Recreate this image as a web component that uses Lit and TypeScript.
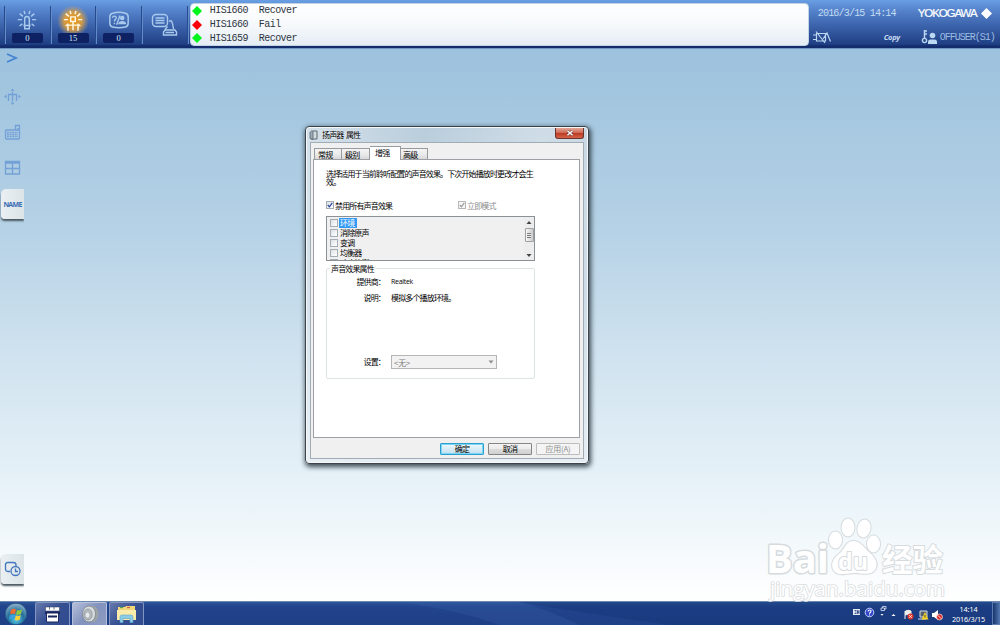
import { html, css, svg, LitElement } from 'lit';
import { customElement, property } from 'lit/decorators.js';
import { classMap } from 'lit/directives/class-map.js';

const MESSAGES = [
  { color: '#00f51c', text: 'HIS1660  Recover' },
  { color: '#fb0006', text: 'HIS1660  Fail' },
  { color: '#00f51c', text: 'HIS1659  Recover' }
];

const TABS = ['常规', '级别', '增强', '高级'];
const EFFECTS = ['环境', '消除原声', '变调', '均衡器', '响度均衡'];

const rays = svg`<path d="M2 10.500H6.500M17.500 10.500H22M4 4L7.500 7M20 4L16.500 7M4 17.500L7 15M20 17.500L17 15M8.800 1L9.800 4.500M15.200 1L14.200 4.500"/>`;

@customElement('system-bar')
export class SystemBar extends LitElement {
  static styles = css`
    :host {
      display: flex;
      height: 49px;
      box-sizing: border-box;
      border-bottom: 1px solid #6f97c4;
      background: linear-gradient(#6a9fe3 0, #5684cd 20%, #385fa7 58%, #203f84 92%, #122c6c 96%, #122c6c);
      color: #c3dcf3;
      font-family: "Liberation Mono", monospace;
    }
    .slot {
      width: 44.700px;
      height: 38px;
      margin-top: 6px;
      border-left: 1px solid #254b8e;
      box-shadow: inset 1px 0 #638bc8;
      display: flex;
      flex-direction: column;
      align-items: center;
    }
    .slot:first-child {
      margin-left: 4px;
    }
    .slot svg {
      width: 22px;
      height: 22px;
      margin: 4px 0 1px;
      fill: none;
      stroke: #a9caed;
      stroke-width: 1.600;
    }
    .slot.lit {
      background: radial-gradient(circle at 22px 15px, #f09a10 0, #e2a03ae0 9px, #c99f6060 13px, #c99f6000 16px);
    }
    .slot.lit svg {
      stroke: #fff8e4;
    }
    .slot.print svg {
      width: 28px;
      height: 26px;
      margin: 5px 0 0;
      stroke-width: 1.400;
    }
    .count {
      width: 31px;
      height: 10px;
      border-radius: 2px;
      background: #0d2163;
      color: #dcecfb;
      font: 8.500px/11px "Liberation Serif", serif;
      text-align: center;
    }
    .log {
      width: 619px;
      height: 43px;
      box-sizing: border-box;
      margin: 3px 0 0;
      padding-left: 1px;
      border-radius: 4px;
      border: 1px solid #c2d4e4;
      background: linear-gradient(#fff, #f5f8fb 55%, #e4edf4);
      display: flex;
      flex-direction: column;
    }
    .divider {
      width: 2px;
      height: 38px;
      margin: 6px 1px 0 0;
      background: linear-gradient(90deg, #254b8e 50%, #638bc8 50%);
    }
    .line {
      height: 14.300px;
      display: flex;
      align-items: center;
      white-space: pre;
      color: #2e3540;
      font-size: 10px;
      letter-spacing: -0.550px;
    }
    .line svg {
      width: 10px;
      height: 10px;
      margin-right: 8px;
    }
    .info {
      flex: 1;
      padding: 6px 4px 0 9px;
      display: flex;
      flex-direction: column;
      justify-content: space-between;
      white-space: nowrap;
    }
    .row {
      display: flex;
      align-items: center;
      height: 14px;
      font-size: 10px;
      letter-spacing: -0.800px;
    }
    .row.low {
      height: 16px;
      margin: 0 0 3px -5px;
      letter-spacing: -1px;
      color: #9cbce2;
    }
    .brand {
      margin-left: 22px;
      font: 11.500px "Liberation Sans", sans-serif;
      letter-spacing: -1.100px;
      color: #fff;
      -webkit-text-stroke: 0.200px #fff;
    }
    .gem {
      margin-left: 5px;
    }
    .copy {
      margin-left: 53px;
      width: 37px;
      font: italic bold 7.500px "Open Sans", sans-serif;
      letter-spacing: -0.300px;
      color: #c7dbf1;
    }
    .user {
      margin-left: 2px;
    }
  `;

  render() {
    return html`
      <div class="slot">
        <svg viewBox="0 0 24 24">${rays}<path d="M9.500 16V9.500Q9.500 7 12 7Q14.500 7 14.500 9.500V16M8 17H16M9.500 17V20.500H14.500V17"/></svg>
        <div class="count">0</div>
      </div>
      <div class="slot lit">
        <svg viewBox="0 0 24 24">${rays}<path d="M9.500 7.500H14.500V12.500H9.500ZM12 13V22M6.500 22.500V16.500H17.500V22.500"/></svg>
        <div class="count">15</div>
      </div>
      <div class="slot">
        <svg viewBox="0 0 24 24">
          <path d="M5 3.500Q12 1.500 19 3.500Q22 4 22 7.500V14.500Q22 18 19 18.500Q12 20 5 18.500Q2 18 2 14.500V7.500Q2 4 5 3.500Z"/>
          <path d="M5 8.500C5 6 9 6 9 8.500C9 10.500 7 10 7 12.500M7 14V15.500M13 6L9.500 16" stroke-width="1.500"/>
          <circle cx="15.500" cy="8.700" r="2.500" fill="#a9caed" stroke="none"/>
          <path d="M11 15.500C11.500 11 19.500 11 20 15.500Z" fill="#a9caed" stroke="none"/>
        </svg>
        <div class="count">0</div>
      </div>
      <div class="slot print">
        <svg viewBox="0 0 28 26">
          <rect x="2.500" y="3.500" width="15" height="12" rx="3.500"/>
          <path d="M5.500 7H14.500M5.500 9.500H14.500M5.500 12H14.500M19 10H21.500Q23 13 23.500 18M15 18.500L17.500 15.500M15 19H25L26.500 21V24H13.500V21ZM15.500 21.500H24"/>
        </svg>
      </div>
      <div class="divider"></div>
      <div class="log">
        ${MESSAGES.map(m => html`
          <div class="line"><svg viewBox="0 0 10 10"><path d="M5 0L10 5L5 10L0 5Z" fill=${m.color} /></svg>${m.text}</div>
        `)}
      </div>
      <div class="info">
        <div class="row">
          <span>2016/3/15 14:14</span>
          <span class="brand">YOKOGAWA</span>
          <svg class="gem" width="11" height="11" viewBox="0 0 11 11"><path d="M5.500 0L11 5.500L5.500 11L0 5.500Z" fill="#fff"/></svg>
        </div>
        <div class="row low">
          <svg width="18" height="13" viewBox="0 0 18 13" fill="none" stroke="#bcd7f1" stroke-width="1.200">
            <path d="M0 4H4M0 8.500H4M3.500 2.500H12.500V10H3.500ZM3 0.500L12 12M10 8L14 2L17.500 10.500"/>
          </svg>
          <span class="copy">Copy</span>
          <svg width="17" height="16" viewBox="0 0 17 16">
            <circle cx="3.500" cy="11.500" r="2.100" fill="none" stroke="#bcd7f1" stroke-width="1.400"/>
            <path d="M3.500 9.500V1M3.500 2H6M3.500 5H6" stroke="#bcd7f1" stroke-width="1.500" fill="none"/>
            <circle cx="11.500" cy="6.500" r="2.800" fill="#bcd7f1"/>
            <path d="M7 15V13Q7 10.500 9.500 10.500H13.500Q16 10.500 16 13V15Z" fill="#bcd7f1"/>
          </svg>
          <span class="user">OFFUSER(S1)</span>
        </div>
      </div>
    `;
  }
}

@customElement('side-rail')
export class SideRail extends LitElement {
  static styles = css`
    :host {
      display: flex;
      flex-direction: column;
      width: 24px;
      height: 100%;
    }
    .icon {
      width: 24px;
      height: 18px;
      fill: none;
      stroke: #73a0d6;
      stroke-width: 1.300;
    }
    .move {
      margin-top: 21px;
    }
    .keys {
      margin-top: 17px;
    }
    .panes {
      margin-top: 18px;
    }
    .tab {
      width: 23px;
      height: 30px;
      margin: 12px 0 0 1px;
      border-radius: 5px 0 0 4px;
      background: linear-gradient(90deg, #e9eff2, #dde4e8);
      box-shadow: 0 2px 2px #4a5860;
      clip-path: inset(-3px 0 -6px -1px);
      display: flex;
      align-items: center;
      justify-content: center;
      font: bold 7px "Open Sans", sans-serif;
      letter-spacing: -0.700px;
      color: #3c6cb4;
    }
    .bottom {
      margin-top: auto;
      margin-bottom: 17px;
    }
  `;

  render() {
    return html`
      <svg class="icon" viewBox="0 0 24 18"><path d="M7 5L16 9L7 13" stroke="#4683d2" stroke-width="1.800"/></svg>
      <svg class="icon move" viewBox="0 0 24 18">
        <path d="M8.500 13V6.500H16.500V13M12.500 4V13.500"/>
        <path d="M12.500 .5L14.500 3H10.500ZM12.500 17L14.500 14.500H10.500ZM4 8.500L6.500 6.500V10.500ZM21 8.500L18.500 6.500V10.500Z" fill="#73a0d6" stroke="none"/>
      </svg>
      <svg class="icon keys" viewBox="0 0 24 18">
        <rect x="5.500" y="7" width="14" height="9" rx="1"/>
        <path d="M7 9.500H18M7 11.500H18M7 13.500H18" stroke-dasharray="1.800 .8"/>
        <path d="M15.500 7V2.500H19.500V6H17"/>
      </svg>
      <svg class="icon panes" viewBox="0 0 24 18">
        <path d="M5.500 2.500H19.500V15H5.500ZM5.500 4H19.500M12.500 4V15M5.500 9.500H19.500"/>
      </svg>
      <div class="tab">NAME</div>
      <div class="tab bottom">
        <svg width="17" height="16" viewBox="0 0 17 16" fill="none" stroke="#4377bd" stroke-width="1.300">
          <path d="M6 10.500H4Q1.500 10.500 1.500 8V3.500Q1.500 1.500 4 1.500H9.500Q12 1.500 12 4V5"/>
          <circle cx="11.500" cy="10" r="4.500"/><path d="M11.500 7.500V10.500H14"/>
        </svg>
      </div>
    `;
  }
}

@customElement('check-box')
export class CheckBox extends LitElement {
  @property({ type: Boolean }) checked = false;
  @property({ type: Boolean }) disabled = false;

  static styles = css`
    :host {
      display: block;
      width: 8px;
      height: 8px;
    }
    .box {
      width: 6px;
      height: 6px;
      border: 1px solid #a3acb5;
      background: linear-gradient(135deg, #dde1e5, #fff);
      display: flex;
    }
    .disabled {
      border-color: #b7b7b7;
      background: #f6f6f6;
    }
  `;

  render() {
    return html`
      <div class="box ${classMap({ disabled: this.disabled })}">
        ${this.checked ? html`<svg viewBox="0 0 6 6"><path d="M.8 3L2.400 4.800L5.300 .8" fill="none" stroke=${this.disabled ? '#999' : '#27429b'} stroke-width="1.200"/></svg>` : ''}
      </div>
    `;
  }
}

@customElement('speaker-dialog')
export class SpeakerDialog extends LitElement {
  static styles = css`
    :host {
      display: flex;
      flex-direction: column;
      box-sizing: border-box;
      width: 284px;
      height: 338px;
      padding: 0 4px 4px;
      border: 1px solid #3c434a;
      border-radius: 4px;
      background: linear-gradient(100deg, #ffffff66 0, #ffffff00 35%, #ffffff50 70%, #ffffff10), linear-gradient(#b9cddc, #c1d3df 70px, #c5d7e4 50%, #e4edf3);
      box-shadow: inset 0 0 0 1px #f4f8fb, 1px 2px 5px 1px #1c2830d0;
      font: 8px/9px "Noto Sans CJK SC", sans-serif;
      letter-spacing: -0.850px;
      color: #000;
    }
    .title {
      height: 18px;
      display: flex;
      align-items: center;
    }
    .title > svg {
      margin-left: -1px;
    }
    .title span {
      margin-left: 4px;
      flex: 1;
      white-space: pre;
      word-spacing: 1.500px;
      text-shadow: 0 0 3px #fff;
    }
    .close {
      align-self: flex-start;
      width: 27px;
      height: 10px;
      margin-top: 1px;
      border: 1px solid #6d332d;
      border-top: 0;
      border-radius: 0 0 3px 3px;
      background: linear-gradient(#e3a798, #cf6c57 45%, #ba3820 50%, #d4644a);
      display: flex;
      align-items: center;
      justify-content: center;
    }
    .client {
      flex: 1;
      border: 1px solid #a1acb5;
      background: #f0f0f0;
      display: flex;
      flex-direction: column;
      padding: 3px 3px 3px 2px;
    }
    .tabs {
      display: flex;
      align-items: flex-end;
      height: 13px;
      padding-left: 1px;
    }
    .tab {
      box-sizing: border-box;
      width: 28px;
      height: 11px;
      padding: 1px 0 0 3px;
      border: 1px solid #979ba0;
      border-bottom: 0;
      background: linear-gradient(#f4f4f4, #ebebeb 50%, #d9d9d9);
    }
    .tab + .tab {
      border-left: 0;
    }
    .tab:last-child {
      width: 27px;
      padding-left: 2px;
    }
    .tab.on {
      width: 31px;
      height: 14px;
      margin-bottom: -1px;
      padding: 1px 0 0 5px;
      background: #fff;
      z-index: 1;
    }
    .page {
      box-sizing: border-box;
      height: 279px;
      border: 1px solid #9da1a5;
      background: #fff;
      padding: 10px 44px 0 12px;
    }
    .intro {
      width: 212px;
      height: 17px;
      line-height: 8px;
      letter-spacing: -0.870px;
      white-space: pre;
    }
    .checks {
      display: flex;
      align-items: center;
      margin-top: 13px;
      height: 10px;
    }
    .checks span {
      width: 123px;
      margin-left: 1px;
    }
    .checks .dim {
      width: 40px;
      color: #8c8c8c;
    }
    .list {
      box-sizing: border-box;
      width: 209px;
      height: 45px;
      margin-top: 6px;
      border: 1px solid #8c9196;
      background: #f0f0f0;
      display: flex;
      overflow: hidden;
    }
    .items {
      flex: 1;
      padding: 1px 0 0 3px;
    }
    .item {
      display: flex;
      height: 10px;
      align-items: center;
    }
    .item span {
      margin-left: 1px;
      padding: 0 3px 0 1px;
      line-height: 10px;
    }
    .item span.sel {
      background: #3299f5;
      color: #fff;
    }
    .scroll {
      width: 10px;
      display: flex;
      flex-direction: column;
      align-items: center;
      background: #ededed;
    }
    .thumb {
      box-sizing: border-box;
      width: 9px;
      height: 14px;
      margin: 2px 0 auto;
      border: 1px solid #a0a0a0;
      border-radius: 1px;
      background: repeating-linear-gradient(#777 0 1px, #eee 1px 2px) center / 4px 5px no-repeat, linear-gradient(90deg, #f6f6f6, #ccc);
    }
    .group {
      box-sizing: border-box;
      width: 209px;
      height: 111px;
      margin-top: 7px;
      border: 1px solid #dde3e5;
      border-radius: 2px;
      display: grid;
      grid-template: 8px 16px 64px 14px / 58px 1fr;
      column-gap: 6px;
    }
    .legend {
      grid-column: 1 / 3;
      justify-self: start;
      height: 8px;
      margin: -4px 0 0 3px;
      padding: 0 1px;
      line-height: 8px;
      background: #fff;
    }
    .label {
      text-align: right;
    }
    .latin {
      font: 7px/9px "Open Sans", sans-serif;
      letter-spacing: -0.300px;
    }
    .select {
      box-sizing: border-box;
      width: 106px;
      height: 14px;
      margin-top: -2px;
      border: 1px solid #b5b5b5;
      background: #f2f2f2;
      padding: 0 2px;
      display: flex;
      align-items: center;
      justify-content: space-between;
      color: #7c7c7c;
      letter-spacing: -0.300px;
    }
    .buttons {
      display: flex;
      justify-content: flex-end;
      gap: 4px;
      margin-top: 5px;
      margin-right: 0;
    }
    .button {
      box-sizing: border-box;
      width: 44px;
      height: 12px;
      border: 1px solid #858585;
      border-radius: 1px;
      background: linear-gradient(#f4f4f4, #ebebeb 50%, #dcdcdc 50%, #d0d0d0);
      text-align: center;
      line-height: 10px;
    }
    .button.main {
      border-color: #2d9fce;
      box-shadow: inset 0 0 0 1px #7ad7f7;
      background: linear-gradient(#eef7fb, #d8ecf6 50%, #c2e0ef);
    }
    .button.off {
      border-color: #bdbdbd;
      background: #f4f4f4;
      color: #8f8f8f;
      letter-spacing: -0.300px;
    }
  `;

  render() {
    return html`
      <div class="title">
        <svg width="9" height="10" viewBox="0 0 9 10"><path d="M2 1H8V9H2Z" fill="#d3dadd" stroke="#5d6b75"/><path d="M1 2V8.500L4 9.500V1" fill="#9dabb5" stroke="#4b5a66" stroke-width=".7"/></svg>
        <span>扬声器 属性</span>
        <div class="close"><svg width="8" height="6" viewBox="0 0 8 6"><path d="M1.500 .8L6.500 5.200M6.500 .8L1.500 5.200" stroke="#6b3a35" stroke-width="2.600"/><path d="M1.500 .8L6.500 5.200M6.500 .8L1.500 5.200" stroke="#fff" stroke-width="1.500"/></svg></div>
      </div>
      <div class="client">
        <div class="tabs">
          ${TABS.map(t => html`<div class="tab ${classMap({ on: t === '增强' })}">${t}</div>`)}
        </div>
        <div class="page">
          <div class="intro">选择适用于当前聆听配置的声音效果。下次开始播放时更改才会生
效。</div>
          <div class="checks">
            <check-box checked></check-box><span>禁用所有声音效果</span>
            <check-box checked disabled></check-box><span class="dim">立即模式</span>
          </div>
          <div class="list">
            <div class="items">
              ${EFFECTS.map((e, i) => html`
                <div class="item"><check-box></check-box><span class=${classMap({ sel: i === 0 })}>${e}</span></div>
              `)}
            </div>
            <div class="scroll">
              <svg width="6" height="9" viewBox="0 0 6 9"><path d="M3 4L5.500 7H.5Z" fill="#444"/></svg>
              <div class="thumb"></div>
              <svg width="6" height="9" viewBox="0 0 6 9"><path d="M3 6L5.500 3H.5Z" fill="#444"/></svg>
            </div>
          </div>
          <div class="group">
            <div class="legend">声音效果属性</div>
            <div class="label">提供商：</div><div class="latin">Realtek</div>
            <div class="label">说明：</div><div>模拟多个播放环境。</div>
            <div class="label">设置：</div>
            <div class="select">&lt;无&gt;<svg width="6" height="4" viewBox="0 0 6 4"><path d="M.5 .5H5.500L3 3.500Z" fill="#8b8b8b"/></svg></div>
          </div>
        </div>
        <div class="buttons">
          <div class="button main">确定</div>
          <div class="button">取消</div>
          <div class="button off">应用(A)</div>
        </div>
      </div>
    `;
  }
}

@customElement('task-bar')
export class TaskBar extends LitElement {
  static styles = css`
    :host {
      display: flex;
      align-items: stretch;
      box-sizing: border-box;
      height: 24px;
      border-top: 1px solid #6d88ad;
      background: linear-gradient(#2d5599, #21448d 20%, #1f3f86);
      color: #fff;
      padding-left: 4px;
    }
    .start {
      width: 24px;
      margin-right: 7px;
    }
    .task {
      box-sizing: border-box;
      width: 35px;
      margin-right: 2px;
      border: 1px solid #8395c1;
      border-bottom: 0;
      border-radius: 2px 2px 0 0;
      background: linear-gradient(135deg, #6779ad, #354f91 50%, #304b8e);
      display: flex;
      align-items: center;
      justify-content: center;
    }
    .active {
      background: linear-gradient(135deg, #b6c0da, #8392bd 50%, #8f9dc3);
      border-color: #b5c0dc;
    }
    .swoosh {
      flex: 1;
      height: 23px;
      overflow: visible;
    }
    .tray {
      display: flex;
      align-items: center;
      z-index: 1;
    }
    .clock {
      width: 43px;
      margin-left: 3px;
      font: 7.200px/10px "Noto Sans", sans-serif;
      letter-spacing: -0.100px;
      text-align: center;
      padding-top: 1px;
      white-space: pre;
    }
    .peek {
      box-sizing: border-box;
      width: 8px;
      margin-left: 2px;
      border: 1px solid #5d7db1;
      border-right: 0;
      background: linear-gradient(90deg, #17356f, #5578b1);
      z-index: 1;
    }
  `;

  render() {
    return html`
      <svg class="start" viewBox="0 0 24 23">
        <defs>
          <radialGradient id="orb" cx=".5" cy=".75" r=".75"><stop offset="0" stop-color="#55cbe7"/><stop offset=".5" stop-color="#246f9c"/><stop offset="1" stop-color="#94b6cc"/></radialGradient>
        </defs>
        <circle cx="12" cy="12" r="10.800" fill="url(#orb)" stroke="#1b4878" stroke-width=".7"/>
        <path d="M7 8Q9.500 6 12 7.500L11 12Q8.500 11 6 12.500Z" fill="#ef6b2e"/>
        <path d="M13 8Q15.500 9 18 7.500L17 12Q14.500 13.500 12 12.300Z" fill="#95c93d"/>
        <path d="M5.800 13.300Q8.500 12 10.800 13L10 17.500Q7.500 16 5 17.500Z" fill="#39a0dd"/>
        <path d="M11.800 13.500Q14.500 14.500 16.800 13L15.800 17.500Q13.500 19 10.900 18Z" fill="#fbd03a"/>
      </svg>
      <div class="task">
        <svg width="17" height="17" viewBox="0 0 17 17"><path d="M1.500 1H15.500V5H1.500Z" fill="#fff" stroke="#29365d" stroke-width=".5"/><path d="M5.500 1V3.500M10 1V3.500" stroke="#456" stroke-width=".8"/><path d="M1 5.500H16V8H1Z" fill="#18245d"/><path d="M2.500 7H14.500V16H2.500Z" fill="#fff" stroke="#1a2760"/><path d="M4 10.500H13" stroke="#18245d" stroke-width="2"/></svg>
      </div>
      <div class="task active">
        <svg width="18" height="18" viewBox="0 0 18 18"><ellipse cx="11.500" cy="9" rx="6" ry="8" fill="#9ba3a7"/><ellipse cx="8" cy="9" rx="6.500" ry="8" fill="#d8dcde" stroke="#727b80" stroke-width=".7"/><ellipse cx="7" cy="9.500" rx="4.200" ry="5.500" fill="#b2b9bd" stroke="#899196" stroke-width=".7"/><ellipse cx="6.500" cy="10" rx="1.900" ry="2.500" fill="#e8eaeb"/></svg>
      </div>
      <div class="task">
        <svg width="21" height="18" viewBox="0 0 21 18"><path d="M2 2H9L10 1H19V15H2Z" fill="#efd77a"/><path d="M1 5H20V15H1Z" fill="#fbebaa"/><path d="M4 2.500H7" stroke="#49a24d" stroke-width="1.300"/><path d="M11 2.500H14" stroke="#d26443" stroke-width="1.300"/><path d="M4 17.500V12Q4 10 6 10H15Q17 10 17 12V17.500H14V13.500H7V17.500Z" fill="#8acbe7" stroke="#5aa6cb" stroke-width=".6"/></svg>
      </div>
      <svg class="swoosh" viewBox="0 0 700 23" preserveAspectRatio="none">
        <path d="M250 0Q310 8 350 23H430Q400 8 370 0Z" fill="#3d65aa" opacity=".25"/>
        <path d="M370 0Q420 9 520 23H860V0Z" fill="#0f2d6c" opacity=".3"/>
      </svg>
      <div class="tray">
        <svg width="92" height="20" viewBox="0 0 92 20">
          <rect x="1" y="5" width="7" height="6" fill="#e3e9f2"/><path d="M2.500 6.500H4.500M2.500 9.500H4.500M3 8H4.500M5.500 10V6.500L7 9.500V6" stroke="#203c7c" stroke-width=".8" fill="none"/>
          <circle cx="17.500" cy="8.500" r="4.300" fill="#3045ca" stroke="#c6d3f7"/><path d="M16 7.500C16 5.500 19.500 5.700 19 7.500C18.800 8.500 17.500 8.500 17.500 9.700M17.500 10.500V11.500" stroke="#fff" stroke-width="1.100" fill="none"/>
          <path d="M29 4H32.500V6.500H29ZM30.500 4V2.500H34V5H32.500" stroke="#dce6f5" stroke-width=".8" fill="none"/><path d="M28.500 10H31.500L30 11.800Z" fill="#fff"/>
          <path d="M39.500 12H43.500L41.500 10Z" fill="#fff"/>
          <path d="M53 7V15M53.500 7Q56 5.500 59 7V11Q56 9.500 53.500 11Z" stroke="#eee" fill="#eee"/><circle cx="58.500" cy="12.500" r="3" fill="#de352b"/><path d="M57.200 11.200L59.800 13.800M59.800 11.200L57.200 13.800" stroke="#fff" stroke-width=".9"/>
          <path d="M68 7H75V13H68ZM66 15H74" stroke="#d8dee6" fill="#555f6e"/><path d="M73 8L76.500 15.500H69.500Z" fill="#f7d32a"/><path d="M73 11V13.500" stroke="#333" stroke-width=".9"/>
          <path d="M80 9H82L86 6V16L82 13H80Z" fill="#fff"/><circle cx="87.500" cy="13" r="3" fill="#d92d2b" stroke="#fff" stroke-width=".6"/><path d="M85.800 11.300L89.200 14.700" stroke="#fff" stroke-width=".8"/>
        </svg>
        <div class="clock">14:14
2016/3/15</div>
      </div>
      <div class="peek"></div>
    `;
  }
}

@customElement('app-root')
export class AppRoot extends LitElement {
  static styles = css`
    :host {
      display: flex;
      flex-direction: column;
      width: 1000px;
      height: 625px;
      overflow: hidden;
    }
    .desktop {
      flex: 1;
      min-height: 0;
      position: relative;
      background: linear-gradient(#9dc2dd 0, #b3d0e5 30%, #cfe2ef 55%, #eaf4f9 82%, #fff 100%);
    }
    speaker-dialog {
      position: absolute;
      left: 305px;
      top: 77px;
    }
    .watermark {
      position: absolute;
      left: 755px;
      top: 461px;
      width: 200px;
      height: 92px;
      fill: #fff;
      stroke: #d6dbde;
      stroke-width: 2px;
      stroke-linejoin: round;
      paint-order: stroke;
      font-family: "Open Sans", sans-serif;
      font-weight: bold;
    }
    .watermark .name {
      stroke-width: 3px;
    }
    .watermark .cjk {
      font-family: "Noto Sans CJK SC", sans-serif;
    }
    .watermark .url {
      font-weight: normal;
      stroke: #d9dde0;
      stroke-width: 1.600px;
    }
  `;

  render() {
    return html`
      <system-bar></system-bar>
      <div class="desktop">
        <side-rail></side-rail>
        <svg class="watermark" viewBox="0 0 200 92">
          <text class="name" x="11" y="63" font-size="40" textLength="63" lengthAdjust="spacingAndGlyphs">Bai</text>
          <ellipse cx="80.500" cy="30" rx="6.500" ry="8.500"/>
          <ellipse cx="93" cy="17.500" rx="6.500" ry="9"/>
          <ellipse cx="109" cy="18.500" rx="6.500" ry="9" transform="rotate(12 109 18.500)"/>
          <ellipse cx="118.500" cy="34" rx="6.500" ry="8.500"/>
          <path d="M98 31C106 31 109 38 115 43C122 49 123 55 120 60C116 66 107 63 99 63C91 63 84 67 79 61C75 55 78 48 84 44C89 40 91 31 98 31Z"/>
          <text x="83" y="60" font-size="24" textLength="30" lengthAdjust="spacingAndGlyphs">du</text>
          <text class="cjk" x="127" y="61" font-size="31" textLength="61" lengthAdjust="spacingAndGlyphs">经验</text>
          <text class="url" x="15" y="86" font-size="20" textLength="175" lengthAdjust="spacingAndGlyphs">jingyan.baidu.com</text>
        </svg>
        <speaker-dialog></speaker-dialog>
      </div>
      <task-bar></task-bar>
    `;
  }
}
